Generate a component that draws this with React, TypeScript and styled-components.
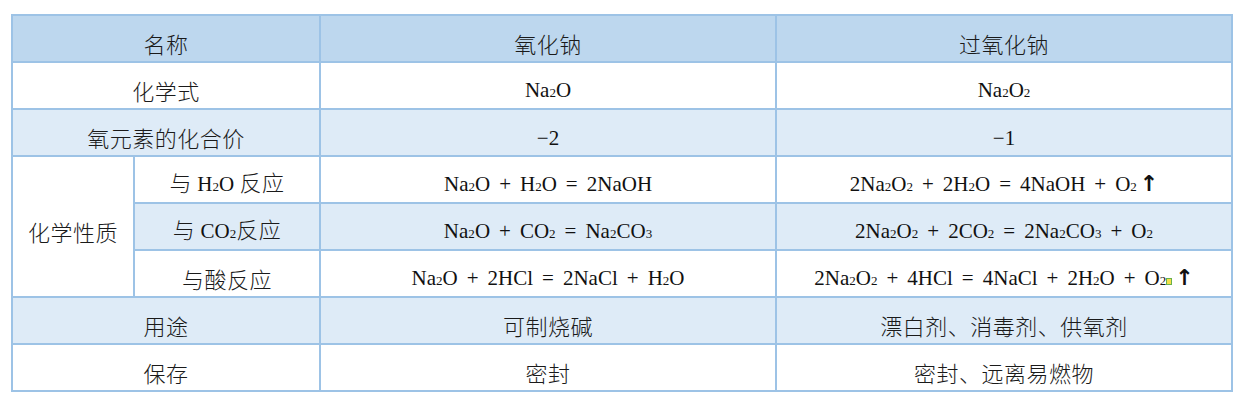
import styled, { createGlobalStyle } from "styled-components";

const GlobalStyle = createGlobalStyle`
  body {
    margin: 0;
    background: #ffffff;
    font-family: "Noto Sans CJK SC", "Noto Sans", sans-serif;
    color: #111111;
  }
`;

const Page = styled.div`
  padding: 14px 0 0 11px;
`;

const Table = styled.table`
  border-collapse: collapse;
  table-layout: fixed;
  width: 1220px;
`;

const Row = styled.tr<{ $tone?: "head" | "alt" | "plain" }>`
  height: 47px;
  background: ${(p) =>
    p.$tone === "head" ? "#bdd7ee" : p.$tone === "alt" ? "#deebf7" : "#ffffff"};
`;

const Cell = styled.td<{ $white?: boolean }>`
  border: 2px solid #9dc3e6;
  text-align: center;
  vertical-align: middle;
  padding: 8px 0 0;
  font-size: 22px;
  line-height: 28px;
  font-weight: 300;
  color: #1a1a1a;
  white-space: nowrap;
  ${(p) => (p.$white ? "background: #ffffff;" : "")}
`;

const Formula = styled.span`
  font-family: "Liberation Serif", "DejaVu Serif", serif;
  font-weight: 400;
  font-size: 21px;
  color: #111111;
  white-space: nowrap;
`;

const Sub = styled.span`
  font-size: 0.62em;
  vertical-align: baseline;
`;

const Op = styled.span`
  display: inline-block;
  margin: 0 9px;
`;

const Up = styled.span`
  font-family: "DejaVu Sans", sans-serif;
  font-weight: 700;
  font-size: 22px;
  line-height: 20px;
  margin-left: 3px;
`;

const Glitch = styled.span`
  display: inline-block;
  width: 4px;
  height: 5px;
  background: #f4e04a;
  border: 1px solid #6ab04c;
  vertical-align: baseline;
`;

const Label = styled.span`
  letter-spacing: 0.5px;
`;

// subscript the digits that follow a letter: "Na2O" -> Na₂O, "2NaOH" keeps its leading 2
const Chem = ({ f }: { f: string }) => {
  const parts: React.ReactNode[] = [];
  let lead = true;
  f.split("").forEach((ch, i) => {
    if (/[0-9]/.test(ch) && !lead) {
      parts.push(<Sub key={i}>{ch}</Sub>);
    } else {
      parts.push(ch);
      if (!/[0-9]/.test(ch)) lead = false;
    }
  });
  return <>{parts}</>;
};

const Equation = ({ tokens, up, glitch }: { tokens: string[]; up?: boolean; glitch?: boolean }) => (
  <Formula>
    {tokens.map((t, i) =>
      t === "+" || t === "=" ? <Op key={i}>{t}</Op> : <Chem key={i} f={t} />
    )}
    {glitch && <Glitch />}
    {up && <Up>↑</Up>}
  </Formula>
);

export default function App() {
  return (
    <Page>
      <GlobalStyle />
      <Table>
        <colgroup>
          <col style={{ width: 122 }} />
          <col style={{ width: 186 }} />
          <col style={{ width: 456 }} />
          <col style={{ width: 456 }} />
        </colgroup>
        <tbody>
          <Row $tone="head">
            <Cell colSpan={2}><Label>名称</Label></Cell>
            <Cell><Label>氧化钠</Label></Cell>
            <Cell><Label>过氧化钠</Label></Cell>
          </Row>
          <Row $tone="plain">
            <Cell colSpan={2}><Label>化学式</Label></Cell>
            <Cell><Formula>Na<Sub>2</Sub>O</Formula></Cell>
            <Cell><Formula>Na<Sub>2</Sub>O<Sub>2</Sub></Formula></Cell>
          </Row>
          <Row $tone="alt">
            <Cell colSpan={2}><Label>氧元素的化合价</Label></Cell>
            <Cell><Formula>−2</Formula></Cell>
            <Cell><Formula>−1</Formula></Cell>
          </Row>
          <Row $tone="plain">
            <Cell rowSpan={3} $white><Label>化学性质</Label></Cell>
            <Cell>
              <Label>与 </Label>
              <Formula>H<Sub>2</Sub>O</Formula>
              <Label> 反应</Label>
            </Cell>
            <Cell><Equation tokens={["Na2O", "+", "H2O", "=", "2NaOH"]} /></Cell>
            <Cell><Equation tokens={["2Na2O2", "+", "2H2O", "=", "4NaOH", "+", "O2"]} up /></Cell>
          </Row>
          <Row $tone="alt">
            <Cell>
              <Label>与 </Label>
              <Formula>CO<Sub>2</Sub></Formula>
              <Label>反应</Label>
            </Cell>
            <Cell><Equation tokens={["Na2O", "+", "CO2", "=", "Na2CO3"]} /></Cell>
            <Cell><Equation tokens={["2Na2O2", "+", "2CO2", "=", "2Na2CO3", "+", "O2"]} /></Cell>
          </Row>
          <Row $tone="plain">
            <Cell><Label>与酸反应</Label></Cell>
            <Cell><Equation tokens={["Na2O", "+", "2HCl", "=", "2NaCl", "+", "H2O"]} /></Cell>
            <Cell><Equation tokens={["2Na2O2", "+", "4HCl", "=", "4NaCl", "+", "2H2O", "+", "O2"]} glitch up /></Cell>
          </Row>
          <Row $tone="alt">
            <Cell colSpan={2}><Label>用途</Label></Cell>
            <Cell><Label>可制烧碱</Label></Cell>
            <Cell><Label>漂白剂、消毒剂、供氧剂</Label></Cell>
          </Row>
          <Row $tone="plain">
            <Cell colSpan={2}><Label>保存</Label></Cell>
            <Cell><Label>密封</Label></Cell>
            <Cell><Label>密封、远离易燃物</Label></Cell>
          </Row>
        </tbody>
      </Table>
    </Page>
  );
}
